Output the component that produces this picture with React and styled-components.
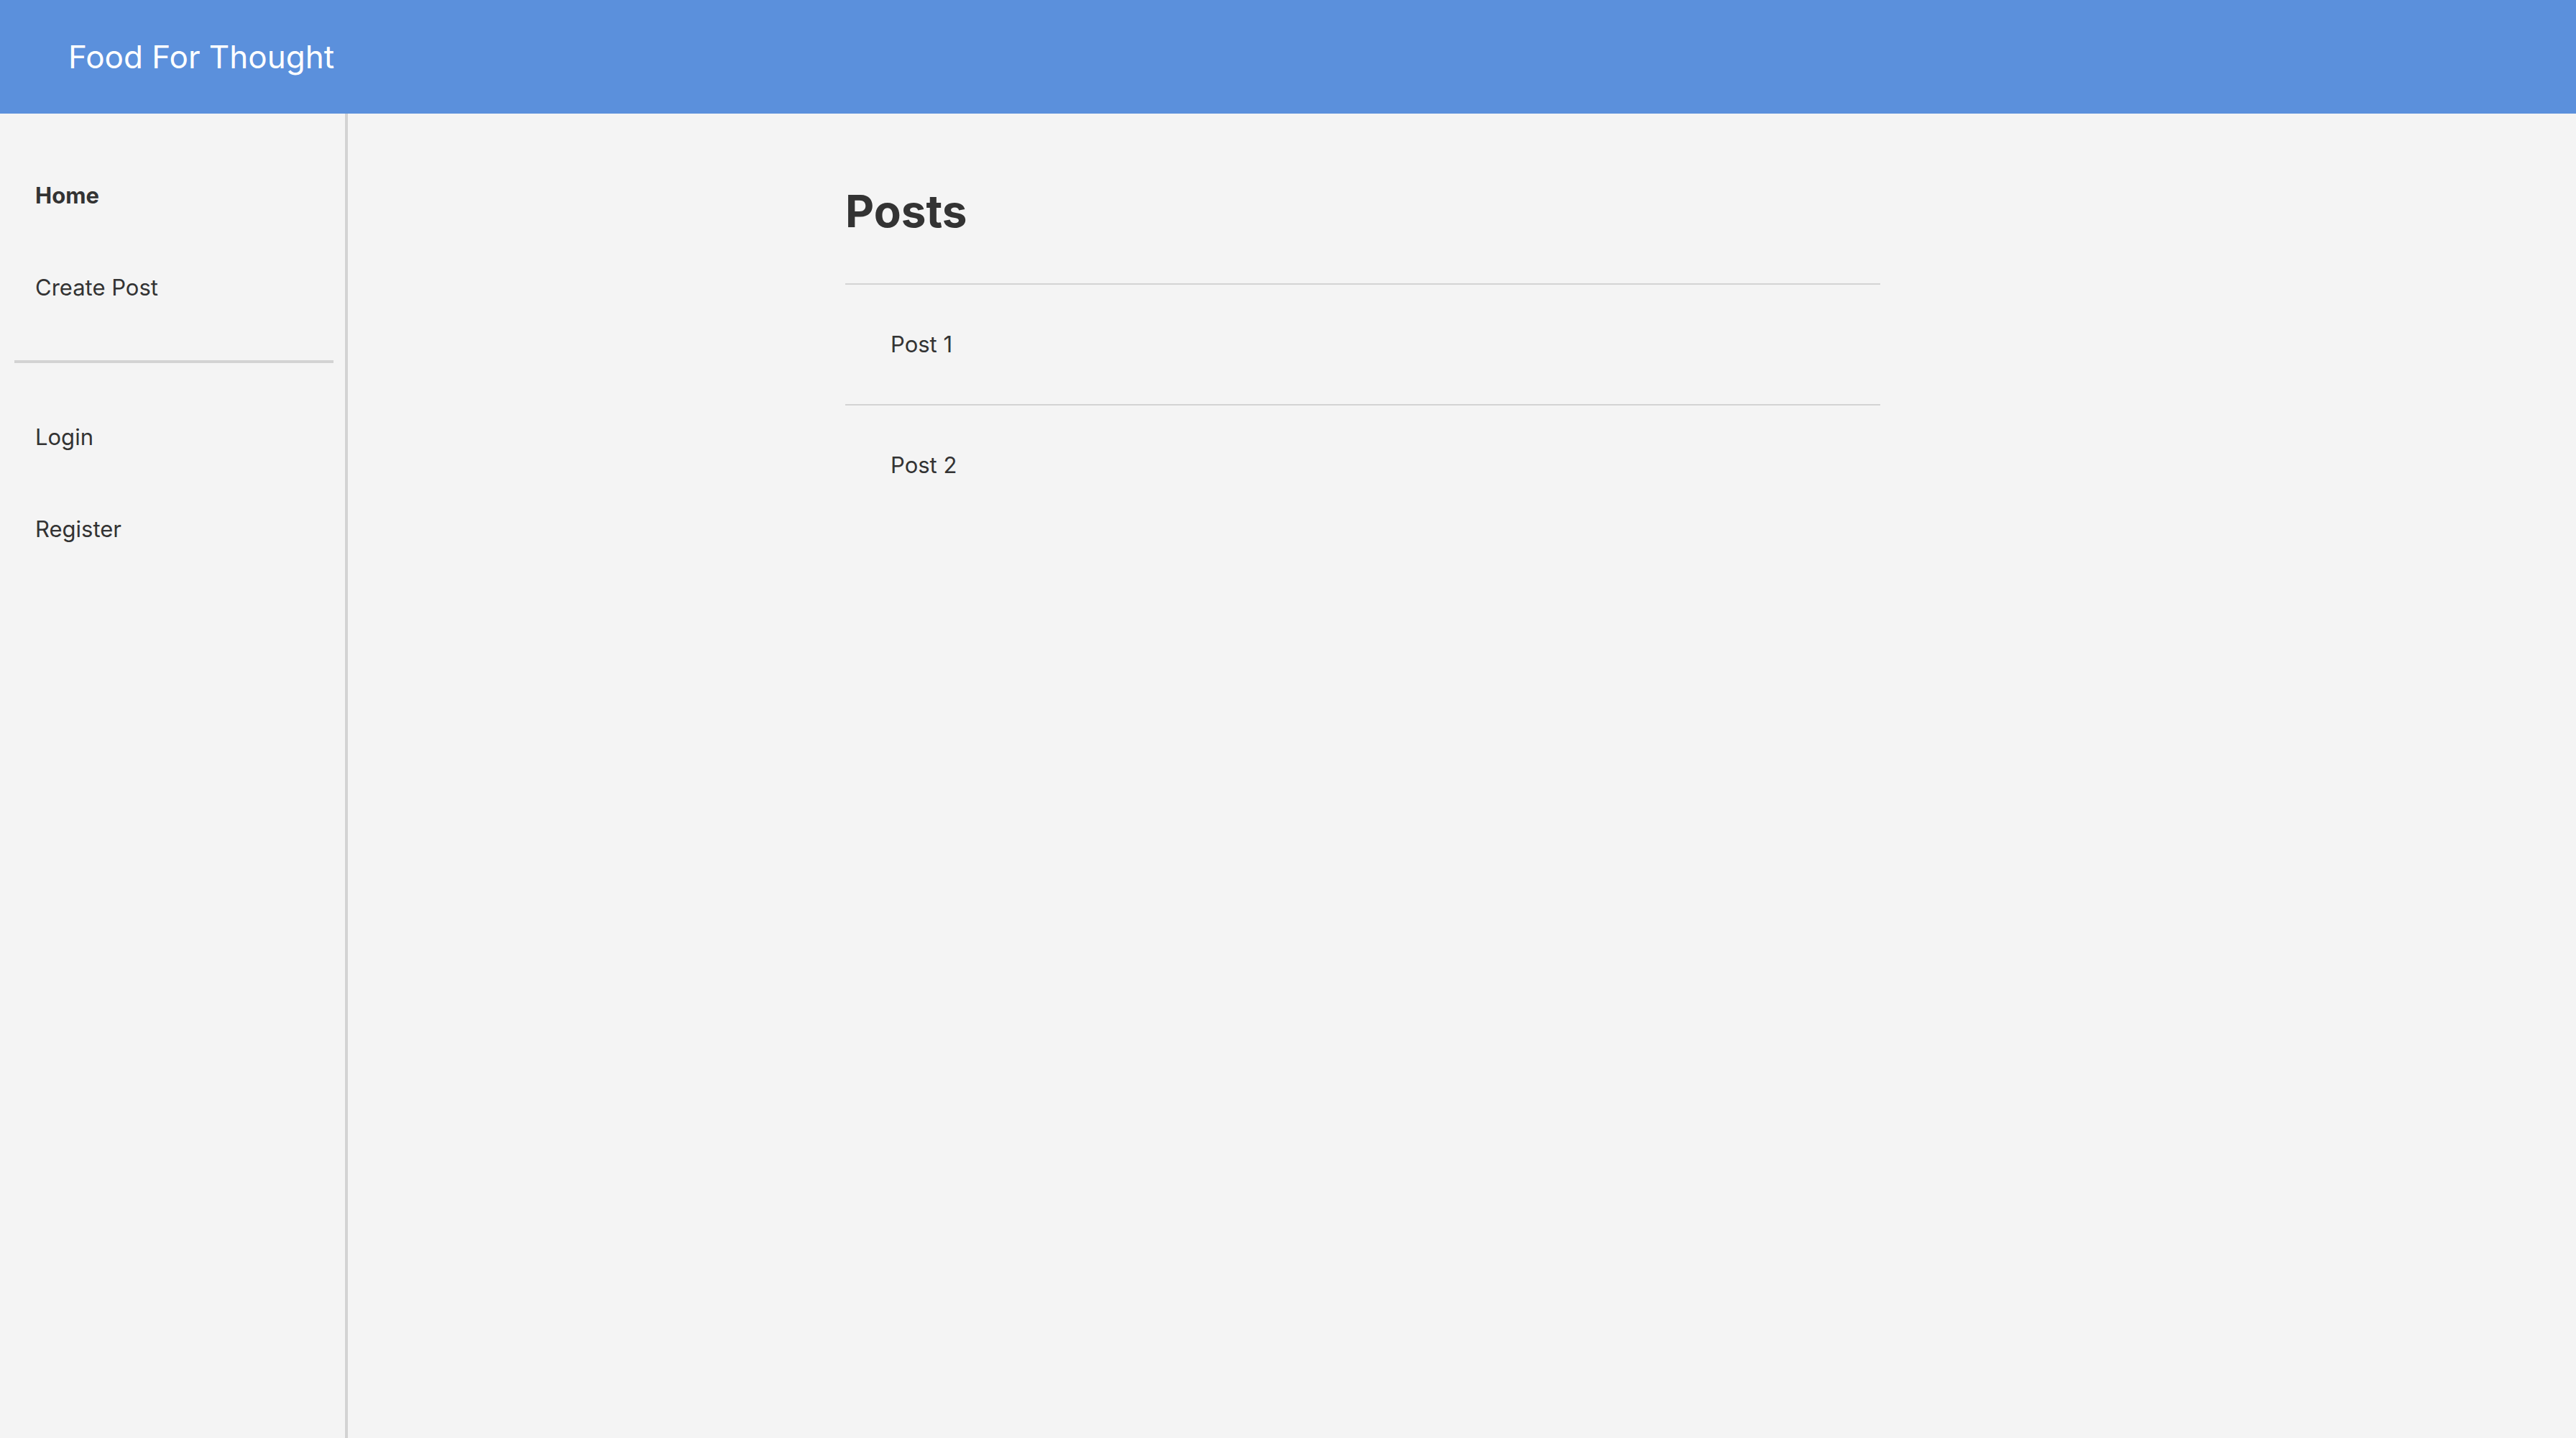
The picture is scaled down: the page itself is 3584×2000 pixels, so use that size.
import React from "react";
import styled, { createGlobalStyle } from "styled-components";

// global
const GlobalStyle = createGlobalStyle`
	html, body {
		margin: 0;
		padding: 0;
		background: #f4f4f4;
	}
	body {
		font-family: Inter, "Noto Sans", "Liberation Sans", sans-serif;
		color: #333333;
	}
	* {
		box-sizing: border-box;
	}
`;

// styles
const Page = styled.div`
	display: flex;
	flex-direction: column;
	min-height: 2000px;
`;

const Header = styled.header`
	height: 158px;
	background: #5b90dc;
	display: flex;
	align-items: center;
	padding-left: 95px;
	flex-shrink: 0;
`;

const Brand = styled.h1`
	margin: 0;
	font-size: 44px;
	font-weight: 400;
	line-height: 56px;
	color: #ffffff;
`;

const Body = styled.div`
	flex: 1;
	display: flex;
`;

const Sidebar = styled.nav`
	width: 484px;
	flex-shrink: 0;
	border-right: 4px solid #d3d3d3;
	padding-top: 50px;
	display: flex;
	flex-direction: column;
`;

const NavItem = styled.a`
	display: block;
	padding: 44px 0 44px 49px;
	font-size: 31px;
	line-height: 40px;
	font-weight: ${(p) => (p.$active ? 700 : 400)};
	color: #333333;
	text-decoration: none;
	cursor: pointer;
`;

const NavDivider = styled.hr`
	margin: 37px 16px 39px 20px;
	border: none;
	height: 4px;
	background: #d3d3d3;
`;

const Main = styled.main`
	flex: 1;
	padding: 96px 0 0 692px;
`;

const Content = styled.section`
	width: 1440px;
`;

const Title = styled.h2`
	margin: 0 0 60px 0;
	font-size: 62px;
	line-height: 80px;
	font-weight: 700;
	color: #333333;
`;

const PostList = styled.ul`
	list-style: none;
	margin: 0;
	padding: 0;
	border-top: 2px solid #d3d3d3;
`;

const PostRow = styled.li`
	padding: 63px 0 63px 63px;
	font-size: 31px;
	line-height: 40px;
	color: #333333;
	border-bottom: ${(p) => (p.$last ? "none" : "2px solid #d3d3d3")};
`;

export default function App() {
	const posts = ["Post 1", "Post 2"];

	return (
		<>
			<GlobalStyle />
			<Page>
				<Header>
					<Brand>Food For Thought</Brand>
				</Header>

				<Body>
					<Sidebar>
						<NavItem $active>Home</NavItem>
						<NavItem>Create Post</NavItem>
						<NavDivider />
						<NavItem>Login</NavItem>
						<NavItem>Register</NavItem>
					</Sidebar>

					<Main>
						<Content>
							<Title>Posts</Title>
							<PostList>
								{posts.map((post, i) => (
									<PostRow key={post} $last={i === posts.length - 1}>
										{post}
									</PostRow>
								))}
							</PostList>
						</Content>
					</Main>
				</Body>
			</Page>
		</>
	);
}
